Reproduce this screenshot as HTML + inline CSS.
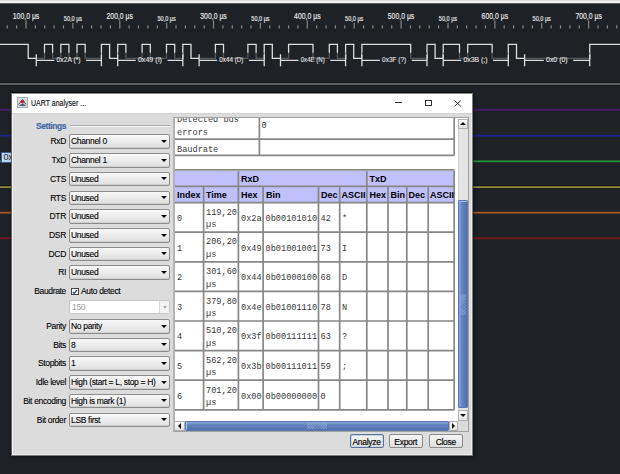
<!DOCTYPE html><html><head><meta charset="utf-8"><style>
*{margin:0;padding:0;box-sizing:border-box}
html,body{width:620px;height:474px;overflow:hidden;background:#1e2126;font-family:"Liberation Sans",sans-serif}
.a{position:absolute}
.hl{position:absolute;left:0;width:620px;height:2px}
#dlg{position:absolute;left:11px;top:93px;width:462px;height:363px;background:#dcdcdc;border:1px solid rgba(0,0,0,0.55);border-top-color:#8a8a8a;border-right-color:#7c7c7c;border-bottom-color:#7c7c7c;box-shadow:inset 1px 1px 0 #f4f4f4, inset -1px -1px 0 #ececec, 1px 1px 4px rgba(0,0,0,.45)}
#title{position:absolute;left:0;top:0;width:460px;height:20px;background:#fff;border-bottom:1px solid #d2d2d2}
.lbl{position:absolute;-webkit-text-stroke:0.1px #000;font-size:8.5px;letter-spacing:-0.33px;color:#000;white-space:nowrap;text-align:right}
.cb{position:absolute;left:57px;width:101px;height:14.5px;border:1px solid #8c8c8c;border-radius:2px;background:linear-gradient(#f9f9f9,#ececec 50%,#dedede);box-shadow:inset 0 -1px 0 #cfcfcf;font-size:8.5px;letter-spacing:-0.33px;color:#000;-webkit-text-stroke:0.1px #000;padding-left:1px;line-height:12px;white-space:nowrap;overflow:hidden}
.cb:after{content:"";position:absolute;right:2px;top:4.5px;border-left:3px solid transparent;border-right:3px solid transparent;border-top:3.5px solid #000}
.mono{font-family:"Liberation Mono",monospace;font-size:8.6px;color:#3a3a3a}
.th{position:absolute;font-weight:bold;font-size:9px;color:#000;white-space:nowrap}
.btn{position:absolute;top:340px;height:14px;border:1px solid #8a8a8a;border-radius:2px;background:linear-gradient(#f6f6f6,#dedede);font-size:8.5px;letter-spacing:-0.3px;color:#000;-webkit-text-stroke:0.15px #000;text-align:center;line-height:14.5px}
</style></head><body>
<div class="a" style="left:0;top:0;width:620px;height:4px;background:linear-gradient(#d9d9d9 0,#d9d9d9 1px,#f0f0f0 1px,#f0f0f0 3px,#5c5e60 3px)"></div>
<svg class="a" style="left:0;top:0" width="620" height="80"><path d="M0 44.4 H28.2 V58.4 H44.5 V44.4 H52.6 V58.4 H60.8 V44.4 H68.9 V58.4 H77.0 V44.4 H85.2 V58.4 H101.4 V44.4 H109.6 V58.4 H117.7 V44.4 H125.9 V58.4 H142.1 V44.4 H150.3 V58.4 H166.5 V44.4 H174.7 V58.4 H182.8 V44.4 H191.0 V58.4 H215.4 V44.4 H223.5 V58.4 H247.9 V44.4 H256.1 V58.4 H264.2 V44.4 H272.3 V58.4 H288.6 V44.4 H313.0 V58.4 H329.3 V44.4 H337.4 V58.4 H345.6 V44.4 H353.7 V58.4 H361.9 V44.4 H410.7 V58.4 H427.0 V44.4 H435.1 V58.4 H443.2 V44.4 H459.5 V58.4 H467.7 V44.4 H492.1 V58.4 H508.3 V44.4 H516.5 V58.4 H589.7 V44.4 H620" fill="none" stroke="#dcdcdc" stroke-width="1.3"/>
<rect x="36.3" y="52.8" width="65.1" height="6.6" fill="#1e2126" fill-opacity="0.72"/><rect x="117.7" y="52.8" width="65.1" height="6.6" fill="#1e2126" fill-opacity="0.72"/><rect x="199.1" y="52.8" width="65.1" height="6.6" fill="#1e2126" fill-opacity="0.72"/><rect x="280.5" y="52.8" width="65.1" height="6.6" fill="#1e2126" fill-opacity="0.72"/><rect x="361.9" y="52.8" width="65.1" height="6.6" fill="#1e2126" fill-opacity="0.72"/><rect x="443.2" y="52.8" width="65.1" height="6.6" fill="#1e2126" fill-opacity="0.72"/><rect x="524.6" y="52.8" width="65.1" height="6.6" fill="#1e2126" fill-opacity="0.72"/>
<path d="M36.3 54.2V66.3M101.4 54.2V66.3M36.3 60.4H54.3M86.1 60.4H101.4M117.7 54.2V66.3M182.8 54.2V66.3M117.7 60.4H135.7M167.5 60.4H182.8M199.1 54.2V66.3M264.2 54.2V66.3M199.1 60.4H217.1M248.9 60.4H264.2M280.5 54.2V66.3M345.6 54.2V66.3M280.5 60.4H298.5M330.3 60.4H345.6M361.9 54.2V66.3M427.0 54.2V66.3M361.9 60.4H379.9M411.7 60.4H427.0M443.2 54.2V66.3M508.3 54.2V66.3M443.2 60.4H461.2M493.0 60.4H508.3M524.6 54.2V66.3M589.7 54.2V66.3M524.6 60.4H543.8M573.2 60.4H589.7" fill="none" stroke="#dcdcdc" stroke-width="1.3"/>
<g font-family="Liberation Sans" font-size="7.3" fill="#e6e6e6" stroke="#e6e6e6" stroke-width="0.1"><text x="56.5" y="62.3" textLength="24.1" lengthAdjust="spacingAndGlyphs">0x2A (*)</text><text x="137.9" y="62.3" textLength="24.1" lengthAdjust="spacingAndGlyphs">0x49 (I)</text><text x="219.3" y="62.3" textLength="24.1" lengthAdjust="spacingAndGlyphs">0x44 (D)</text><text x="300.7" y="62.3" textLength="24.1" lengthAdjust="spacingAndGlyphs">0x4E (N)</text><text x="382.1" y="62.3" textLength="24.1" lengthAdjust="spacingAndGlyphs">0x3F (?)</text><text x="463.4" y="62.3" textLength="24.1" lengthAdjust="spacingAndGlyphs">0x3B (;)</text><text x="546.0" y="62.3" textLength="21.7" lengthAdjust="spacingAndGlyphs">0x0 (0)</text></g>
<path d="M7.2 25.2V28.5M16.6 25.2V28.5M26.0 20.5V28.5M35.4 25.2V28.5M44.8 25.2V28.5M54.1 25.2V28.5M63.5 25.2V28.5M72.9 22.8V28.5M82.3 25.2V28.5M91.6 25.2V28.5M101.0 25.2V28.5M110.4 25.2V28.5M119.8 20.5V28.5M129.1 25.2V28.5M138.5 25.2V28.5M147.9 25.2V28.5M157.3 25.2V28.5M166.7 22.8V28.5M176.0 25.2V28.5M185.4 25.2V28.5M194.8 25.2V28.5M204.2 25.2V28.5M213.5 20.5V28.5M222.9 25.2V28.5M232.3 25.2V28.5M241.7 25.2V28.5M251.0 25.2V28.5M260.4 22.8V28.5M269.8 25.2V28.5M279.2 25.2V28.5M288.6 25.2V28.5M297.9 25.2V28.5M307.3 20.5V28.5M316.7 25.2V28.5M326.1 25.2V28.5M335.4 25.2V28.5M344.8 25.2V28.5M354.2 22.8V28.5M363.6 25.2V28.5M372.9 25.2V28.5M382.3 25.2V28.5M391.7 25.2V28.5M401.1 20.5V28.5M410.5 25.2V28.5M419.8 25.2V28.5M429.2 25.2V28.5M438.6 25.2V28.5M448.0 22.8V28.5M457.3 25.2V28.5M466.7 25.2V28.5M476.1 25.2V28.5M485.5 25.2V28.5M494.9 20.5V28.5M504.2 25.2V28.5M513.6 25.2V28.5M523.0 25.2V28.5M532.4 25.2V28.5M541.7 22.8V28.5M551.1 25.2V28.5M560.5 25.2V28.5M569.9 25.2V28.5M579.2 25.2V28.5M588.6 20.5V28.5M598.0 25.2V28.5M607.4 25.2V28.5M616.8 25.2V28.5" stroke="#858585" stroke-width="1.2"/>
<g font-family="Liberation Sans" fill="#ececec" stroke="#ececec" stroke-width="0.15"><text x="12.8" y="18.8" font-size="8.8" textLength="26.5" lengthAdjust="spacingAndGlyphs">100,0 µs</text><text x="63.8" y="21.1" font-size="6.4" textLength="18.3" lengthAdjust="spacingAndGlyphs">50,0 µs</text><text x="106.5" y="18.8" font-size="8.8" textLength="26.5" lengthAdjust="spacingAndGlyphs">200,0 µs</text><text x="157.5" y="21.1" font-size="6.4" textLength="18.3" lengthAdjust="spacingAndGlyphs">50,0 µs</text><text x="200.3" y="18.8" font-size="8.8" textLength="26.5" lengthAdjust="spacingAndGlyphs">300,0 µs</text><text x="251.3" y="21.1" font-size="6.4" textLength="18.3" lengthAdjust="spacingAndGlyphs">50,0 µs</text><text x="294.1" y="18.8" font-size="8.8" textLength="26.5" lengthAdjust="spacingAndGlyphs">400,0 µs</text><text x="345.1" y="21.1" font-size="6.4" textLength="18.3" lengthAdjust="spacingAndGlyphs">50,0 µs</text><text x="387.8" y="18.8" font-size="8.8" textLength="26.5" lengthAdjust="spacingAndGlyphs">500,0 µs</text><text x="438.8" y="21.1" font-size="6.4" textLength="18.3" lengthAdjust="spacingAndGlyphs">50,0 µs</text><text x="481.6" y="18.8" font-size="8.8" textLength="26.5" lengthAdjust="spacingAndGlyphs">600,0 µs</text><text x="532.6" y="21.1" font-size="6.4" textLength="18.3" lengthAdjust="spacingAndGlyphs">50,0 µs</text><text x="575.4" y="18.8" font-size="8.8" textLength="26.5" lengthAdjust="spacingAndGlyphs">700,0 µs</text><text x="626.4" y="21.1" font-size="6.4" textLength="18.3" lengthAdjust="spacingAndGlyphs">50,0 µs</text></g></svg>
<div class="hl" style="top:82px;height:4px;background:#15171b"></div><div class="hl" style="top:83px;height:2px;background:#5c5f63"></div>
<div class="hl" style="top:108px;height:1px;background:rgb(34,32,45)"></div>
<div class="hl" style="top:109px;height:1px;background:rgb(70,26,112)"></div>
<div class="hl" style="top:110px;height:1px;background:rgb(58,28,90)"></div>
<div class="hl" style="top:134px;height:1px;background:rgb(30,33,60)"></div>
<div class="hl" style="top:135px;height:1px;background:rgb(28,34,148)"></div>
<div class="hl" style="top:136px;height:1px;background:rgb(29,34,104)"></div>
<div class="hl" style="top:160px;height:1px;background:rgb(34,100,49)"></div>
<div class="hl" style="top:161px;height:1px;background:rgb(36,145,56)"></div>
<div class="hl" style="top:162px;height:1px;background:rgb(31,55,42)"></div>
<div class="hl" style="top:186px;height:1px;background:rgb(120,115,52)"></div>
<div class="hl" style="top:187px;height:1px;background:rgb(142,136,56)"></div>
<div class="hl" style="top:211px;height:1px;background:rgb(57,44,38)"></div>
<div class="hl" style="top:212px;height:1px;background:rgb(165,88,36)"></div>
<div class="hl" style="top:213px;height:1px;background:rgb(111,66,37)"></div>
<div class="hl" style="top:237px;height:1px;background:rgb(82,28,32)"></div>
<div class="hl" style="top:238px;height:1px;background:rgb(116,24,28)"></div>
<div class="hl" style="top:239px;height:1px;background:rgb(47,31,36)"></div>
<div class="hl" style="top:185px;height:1px;background:#121520"></div>
<div class="a" style="left:1px;top:152px;width:12px;height:10.5px;background:#bcd3f2;border:1px solid #3d5f9c;border-right:none;font-size:9px;color:#2a2a2a;line-height:9px;padding-left:1.5px;overflow:hidden;white-space:nowrap">0x</div>
<div class="a" style="left:11px;top:92px;width:461px;height:1px;background:#050709"></div>
<div id="dlg">
<div id="title"></div>
<svg class="a" style="left:5px;top:3px" width="12" height="12"><rect x="0.5" y="0.5" width="10" height="10" fill="#d6dae2" stroke="#a8aeb8"/><path d="M2 9Q5.5 4 9 9Z" fill="#5a6070"/><path d="M1.5 7.5L5.5 2.5L9 7.5" fill="none" stroke="#4a505c" stroke-width="1"/><circle cx="5.5" cy="4.8" r="1.7" fill="#d82020"/></svg>
<div class="a" style="left:19px;top:4px;font-size:9px;color:#111;-webkit-text-stroke:0.15px #111;white-space:nowrap;line-height:10px;transform:scaleX(0.78);transform-origin:0 0">UART analyser ...</div>
<div class="a" style="left:383px;top:8px;width:6.5px;height:1px;background:#333"></div>
<div class="a" style="left:412.5px;top:6px;width:7px;height:6px;border:1px solid #333"></div>
<svg class="a" style="left:441.5px;top:6px" width="8" height="7"><path d="M0.5 0.5L6.8 6.3M6.8 0.5L0.5 6.3" stroke="#333" stroke-width="1"/></svg>
<div class="a" style="left:24px;top:27.5px;font-size:8.5px;font-weight:bold;letter-spacing:-0.45px;color:#3f66a8;-webkit-text-stroke:0.15px #3f66a8;line-height:9px">Settings</div>
<div class="a" style="left:58px;top:30.5px;width:100px;height:2px;border-top:1px solid #a8a8a8;border-bottom:1px solid #f8f8f8"></div>
<div class="lbl" style="top:40.2px;line-height:14px;right:406px">RxD</div>
<div class="cb" style="top:40.2px">Channel 0</div>
<div class="lbl" style="top:59.0px;line-height:14px;right:406px">TxD</div>
<div class="cb" style="top:59.0px">Channel 1</div>
<div class="lbl" style="top:77.8px;line-height:14px;right:406px">CTS</div>
<div class="cb" style="top:77.8px">Unused</div>
<div class="lbl" style="top:96.6px;line-height:14px;right:406px">RTS</div>
<div class="cb" style="top:96.6px">Unused</div>
<div class="lbl" style="top:115.4px;line-height:14px;right:406px">DTR</div>
<div class="cb" style="top:115.4px">Unused</div>
<div class="lbl" style="top:134.1px;line-height:14px;right:406px">DSR</div>
<div class="cb" style="top:134.1px">Unused</div>
<div class="lbl" style="top:152.8px;line-height:14px;right:406px">DCD</div>
<div class="cb" style="top:152.8px">Unused</div>
<div class="lbl" style="top:171.4px;line-height:14px;right:406px">RI</div>
<div class="cb" style="top:171.4px">Unused</div>
<div class="lbl" style="top:189.6px;line-height:14px;right:406px">Baudrate</div>
<div class="a" style="left:59px;top:193.6px;width:7.5px;height:7.5px;border:1px solid #444;background:#fff"><svg class="a" style="left:0;top:0" width="6" height="6"><path d="M0.8 2.8L2.3 4.6L5 0.8" fill="none" stroke="#1a3f8a" stroke-width="1.2"/></svg></div>
<div class="a" style="left:69px;top:189.6px;font-size:8.5px;letter-spacing:-0.33px;color:#000;-webkit-text-stroke:0.1px #000;line-height:14px">Auto detect</div>
<div class="a" style="left:57px;top:206.3px;width:101px;height:14px;border:1px solid #c6c6c6;border-radius:2px;background:#fff;font-size:8.5px;letter-spacing:-0.3px;color:#a0a0a0;padding-left:2px;line-height:12px">150<div class="a" style="right:0;top:0;width:10px;height:12px;border-left:1px solid #dadada;background:#f4f4f4"><div class="a" style="left:2.5px;top:4.5px;border-left:2.5px solid transparent;border-right:2.5px solid transparent;border-top:3px solid #b0b0b0"></div></div></div>
<div class="lbl" style="top:225.2px;line-height:14px;right:406px">Parity</div>
<div class="cb" style="top:225.2px">No parity</div>
<div class="lbl" style="top:243.8px;line-height:14px;right:406px">Bits</div>
<div class="cb" style="top:243.8px">8</div>
<div class="lbl" style="top:262.4px;line-height:14px;right:406px">Stopbits</div>
<div class="cb" style="top:262.4px">1</div>
<div class="lbl" style="top:281.2px;line-height:14px;right:406px">Idle level</div>
<div class="cb" style="top:281.2px">High (start = L, stop = H)</div>
<div class="lbl" style="top:299.8px;line-height:14px;right:406px">Bit encoding</div>
<div class="cb" style="top:299.8px">High is mark (1)</div>
<div class="lbl" style="top:318.5px;line-height:14px;right:406px">Bit order</div>
<div class="cb" style="top:318.5px">LSB first</div>
<div class="a" style="left:161px;top:23px;width:296px;height:315px;background:#fff;border:1px solid #a0a0a0;border-left:2px solid #b4b4b4;overflow:hidden">
<svg class="a" style="left:0;top:0" width="296" height="60"><g transform="translate(-175,-118)"><path d="M454.2 100V155.6M175 139.2H454.2M175 155.4H454.2M259.4 100V155.6" stroke="#878787" stroke-width="1.7" fill="none"/></g></svg>
<div class="a mono" style="left:2.0px;top:-4.5px;line-height:13px;white-space:nowrap">Detected bus<br>errors</div>
<div class="a mono" style="left:86.5px;top:1.7px;line-height:13px">0</div>
<div class="a mono" style="left:2.0px;top:25.5px;line-height:13px">Baudrate</div>
<div class="a" style="left:0.0px;top:52.5px;width:280.0px;height:32.0px;background:#c0c0fc"></div>
<svg class="a" style="left:0;top:0" width="296" height="315"><g transform="translate(-175,-118)"><path d="M175 169.90H454.5M175 186.4H454.5M175 202.60H454.5M175 232.20H454.5M175 261.80H454.5M175 291.40H454.5M175 321.00H454.5M175 350.60H454.5M175 380.20H454.5M175 409.80H454.5M454.2 171V409.6M203.60 186.40V409.6M238.40 171.20V409.6M263.10 186.40V409.6M318.50 186.40V409.6M339.70 186.40V409.6M366.80 171.20V409.6M388.00 186.40V409.6M406.80 186.40V409.6M428.20 186.40V409.6" stroke="#878787" stroke-width="1.7" fill="none"/></g></svg>
<div class="th" style="left:66.0px;top:56.0px;line-height:10px">RxD</div>
<div class="th" style="left:194.5px;top:56.0px;line-height:10px">TxD</div>
<div class="th" style="left:2.0px;top:72.3px;line-height:10px">Index</div>
<div class="th" style="left:31.0px;top:72.3px;line-height:10px">Time</div>
<div class="th" style="left:66.0px;top:72.3px;line-height:10px">Hex</div>
<div class="th" style="left:91.0px;top:72.3px;line-height:10px">Bin</div>
<div class="th" style="left:146.0px;top:72.3px;line-height:10px">Dec</div>
<div class="th" style="left:166.5px;top:72.3px;line-height:10px">ASCII</div>
<div class="th" style="left:194.5px;top:72.3px;line-height:10px">Hex</div>
<div class="th" style="left:215.5px;top:72.3px;line-height:10px">Bin</div>
<div class="th" style="left:233.5px;top:72.3px;line-height:10px">Dec</div>
<div class="th" style="left:255.0px;top:72.3px;line-height:10px">ASCII</div>
<div class="a mono" style="left:2.0px;top:95.8px;line-height:10px">0</div>
<div class="a mono" style="left:31.0px;top:88.7px;line-height:12.5px">119,20<br>µs</div>
<div class="a mono" style="left:66.0px;top:95.8px;line-height:10px">0x2a</div>
<div class="a mono" style="left:90.5px;top:95.8px;line-height:10px">0b00101010</div>
<div class="a mono" style="left:145.5px;top:95.8px;line-height:10px">42</div>
<div class="a mono" style="left:167.0px;top:95.8px;line-height:10px">*</div>
<div class="a mono" style="left:2.0px;top:125.5px;line-height:10px">1</div>
<div class="a mono" style="left:31.0px;top:118.3px;line-height:12.5px">206,20<br>µs</div>
<div class="a mono" style="left:66.0px;top:125.5px;line-height:10px">0x49</div>
<div class="a mono" style="left:90.5px;top:125.5px;line-height:10px">0b01001001</div>
<div class="a mono" style="left:145.5px;top:125.5px;line-height:10px">73</div>
<div class="a mono" style="left:167.0px;top:125.5px;line-height:10px">I</div>
<div class="a mono" style="left:2.0px;top:155.1px;line-height:10px">2</div>
<div class="a mono" style="left:31.0px;top:148.0px;line-height:12.5px">301,60<br>µs</div>
<div class="a mono" style="left:66.0px;top:155.1px;line-height:10px">0x44</div>
<div class="a mono" style="left:90.5px;top:155.1px;line-height:10px">0b01000100</div>
<div class="a mono" style="left:145.5px;top:155.1px;line-height:10px">68</div>
<div class="a mono" style="left:167.0px;top:155.1px;line-height:10px">D</div>
<div class="a mono" style="left:2.0px;top:184.8px;line-height:10px">3</div>
<div class="a mono" style="left:31.0px;top:177.6px;line-height:12.5px">379,80<br>µs</div>
<div class="a mono" style="left:66.0px;top:184.8px;line-height:10px">0x4e</div>
<div class="a mono" style="left:90.5px;top:184.8px;line-height:10px">0b01001110</div>
<div class="a mono" style="left:145.5px;top:184.8px;line-height:10px">78</div>
<div class="a mono" style="left:167.0px;top:184.8px;line-height:10px">N</div>
<div class="a mono" style="left:2.0px;top:214.4px;line-height:10px">4</div>
<div class="a mono" style="left:31.0px;top:207.3px;line-height:12.5px">510,20<br>µs</div>
<div class="a mono" style="left:66.0px;top:214.4px;line-height:10px">0x3f</div>
<div class="a mono" style="left:90.5px;top:214.4px;line-height:10px">0b00111111</div>
<div class="a mono" style="left:145.5px;top:214.4px;line-height:10px">63</div>
<div class="a mono" style="left:167.0px;top:214.4px;line-height:10px">?</div>
<div class="a mono" style="left:2.0px;top:244.1px;line-height:10px">5</div>
<div class="a mono" style="left:31.0px;top:236.9px;line-height:12.5px">562,20<br>µs</div>
<div class="a mono" style="left:66.0px;top:244.1px;line-height:10px">0x3b</div>
<div class="a mono" style="left:90.5px;top:244.1px;line-height:10px">0b00111011</div>
<div class="a mono" style="left:145.5px;top:244.1px;line-height:10px">59</div>
<div class="a mono" style="left:167.0px;top:244.1px;line-height:10px">;</div>
<div class="a mono" style="left:2.0px;top:273.7px;line-height:10px">6</div>
<div class="a mono" style="left:31.0px;top:266.6px;line-height:12.5px">701,20<br>µs</div>
<div class="a mono" style="left:66.0px;top:273.7px;line-height:10px">0x00</div>
<div class="a mono" style="left:90.5px;top:273.7px;line-height:10px">0b00000000</div>
<div class="a mono" style="left:145.5px;top:273.7px;line-height:10px">0</div>
<div class="a mono" style="left:167.0px;top:273.7px;line-height:10px"></div>
<div class="a" style="left:280.0px;top:0.5px;width:3.0px;height:302.5px;background:#fff"></div>
<div class="a" style="left:283.0px;top:0.5px;width:10.0px;height:302.5px;background:#e4e4e4;border-left:1px solid #cfcfcf"></div>
<div class="a" style="left:283.0px;top:0.5px;width:10.0px;height:10.0px;background:linear-gradient(#fafafa,#e2e2e2);border:1px solid #b0b0b0"></div>
<div class="a" style="left:285.0px;top:4.0px;border-left:3px solid transparent;border-right:3px solid transparent;border-bottom:3px solid #111"></div>
<div class="a" style="left:283.0px;top:81.5px;width:10.0px;height:208.5px;background:linear-gradient(90deg,#8ba8d8,#6584c0 35%,#5070ae);border:1px solid #5a78b0;box-shadow:inset 0 1px 0 #a9c2ea;border-radius:1px"></div>
<div class="a" style="left:285.0px;top:175.5px;width:6.0px;height:21.0px;background:repeating-linear-gradient(45deg,rgba(160,185,225,.3) 0 1px,transparent 1px 2px),repeating-linear-gradient(-45deg,rgba(160,185,225,.22) 0 1px,transparent 1px 2px)"></div>
<div class="a" style="left:283.0px;top:291.5px;width:10.0px;height:11.0px;background:linear-gradient(#fafafa,#e2e2e2);border:1px solid #b0b0b0"></div>
<div class="a" style="left:285.0px;top:296.0px;border-left:3px solid transparent;border-right:3px solid transparent;border-top:3px solid #111"></div>
<div class="a" style="left:-1.0px;top:303.0px;width:284.0px;height:10.0px;background:#e4e4e4;border-top:1px solid #cfcfcf"></div>
<div class="a" style="left:-1.0px;top:303.0px;width:11.0px;height:10.0px;background:linear-gradient(#fafafa,#e2e2e2);border:1px solid #b0b0b0"></div>
<div class="a" style="left:3.0px;top:305.0px;border-top:3px solid transparent;border-bottom:3px solid transparent;border-right:3px solid #111"></div>
<div class="a" style="left:10.0px;top:303.0px;width:264.0px;height:10.0px;background:linear-gradient(#8ba8d8,#6584c0 35%,#5070ae);border:1px solid #5a78b0;box-shadow:inset 1px 0 0 #a9c2ea;border-radius:1px"></div>
<div class="a" style="left:132.0px;top:305.0px;width:20.0px;height:6.0px;background:repeating-linear-gradient(45deg,rgba(160,185,225,.3) 0 1px,transparent 1px 2px),repeating-linear-gradient(-45deg,rgba(160,185,225,.22) 0 1px,transparent 1px 2px)"></div>
<div class="a" style="left:274.0px;top:303.0px;width:9.0px;height:10.0px;background:linear-gradient(#fafafa,#e2e2e2);border:1px solid #b0b0b0"></div>
<div class="a" style="left:277.0px;top:305.0px;border-top:3px solid transparent;border-bottom:3px solid transparent;border-left:3px solid #111"></div>
<div class="a" style="left:283.0px;top:303.0px;width:10.0px;height:10.0px;background:#dcdcdc"></div>
</div>
<div class="btn" style="left:337.5px;width:34.0px;border-color:#5f7392;box-shadow:inset 0 0 0 1px #c4d4ea">Analyze</div>
<div class="btn" style="left:376.5px;width:34.5px;">Export</div>
<div class="btn" style="left:416.5px;width:34.5px;">Close</div>
</div>
</body></html>
